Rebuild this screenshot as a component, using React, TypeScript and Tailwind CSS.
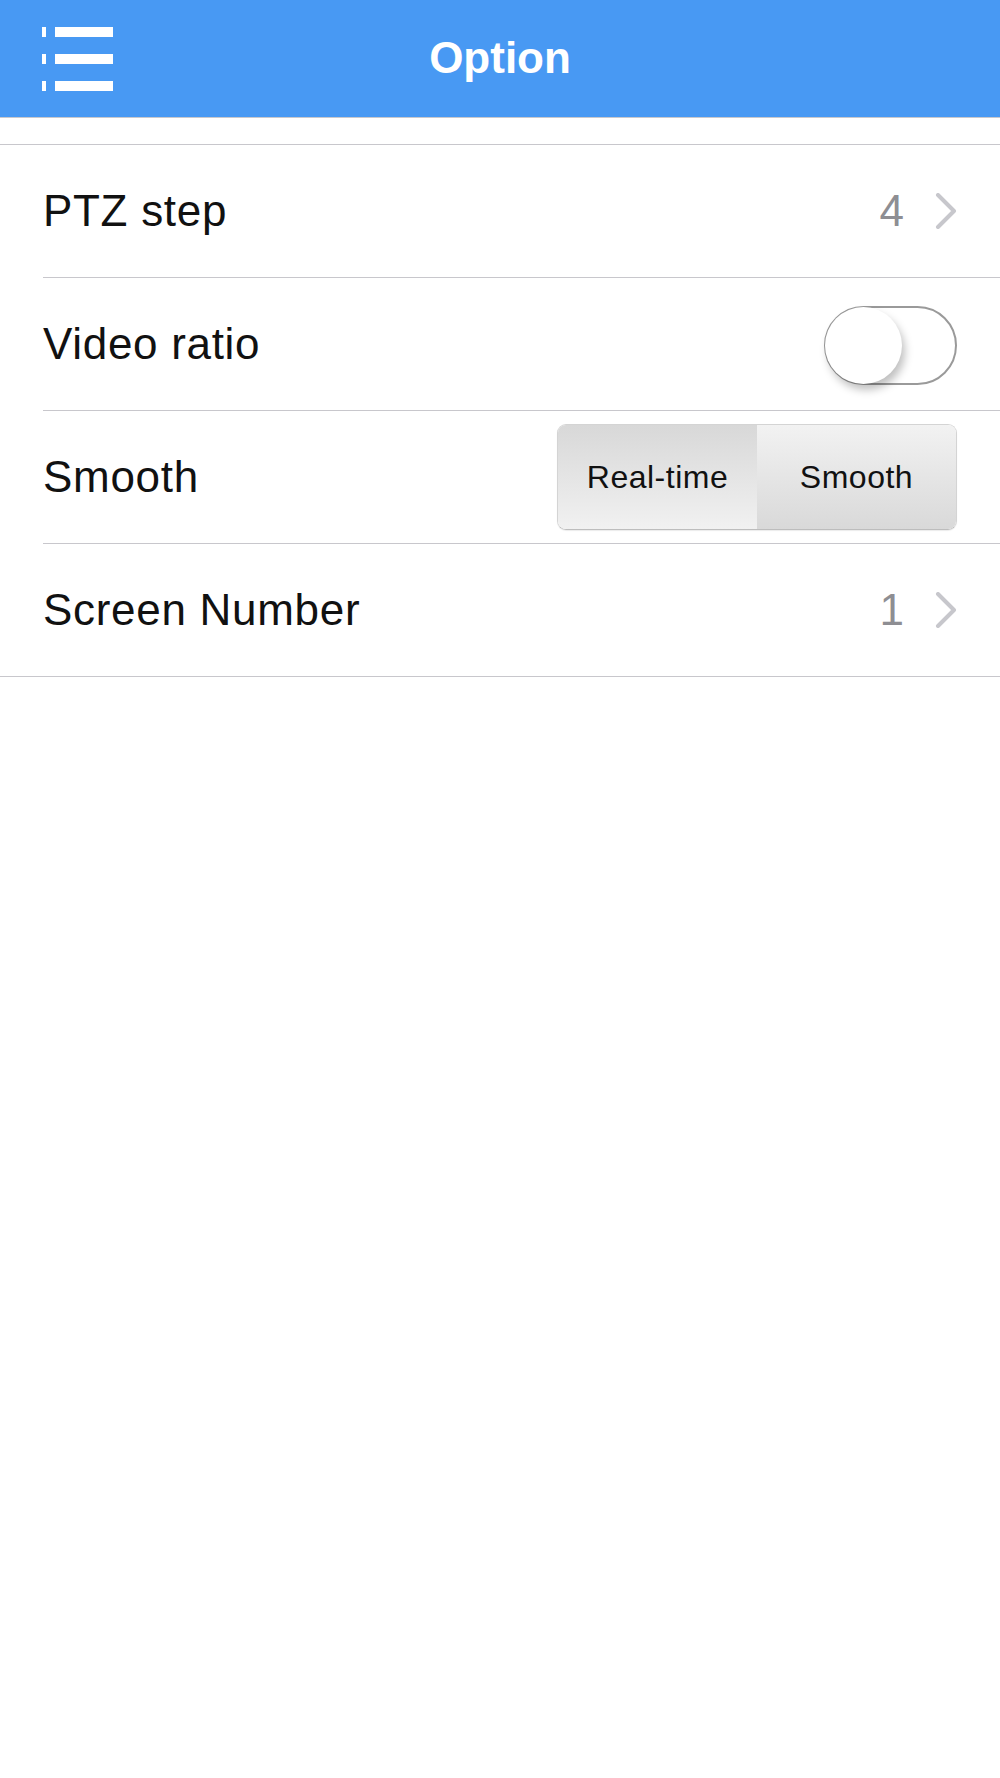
import { useState } from 'react';

const font = { fontFamily: '"Liberation Sans", Arial, sans-serif' };

const Chevron = () => (
  <svg width="22" height="36" viewBox="0 0 22 36" fill="none">
    <path d="M3 2 L19 18 L3 34" stroke="#c7c7cc" strokeWidth="4" strokeLinecap="round" strokeLinejoin="round" />
  </svg>
);

const MenuIcon = () => (
  <div className="flex flex-col gap-[17px]">
    {[0, 1, 2].map((i) => (
      <div key={i} className="flex items-center gap-[9px]">
        <div className="w-[4px] h-[10px] bg-white" />
        <div className="w-[58px] h-[10px] bg-white" />
      </div>
    ))}
  </div>
);

const App: React.FC = () => {
  const [ratio, setRatio] = useState(false);
  const [mode, setMode] = useState<'realtime' | 'smooth'>('smooth');

  return (
    <div className="w-[1000px] min-h-[1778px] bg-white" style={font}>
      {/* header */}
      <div className="relative h-[117px] bg-[#4899f3] flex items-center justify-center">
        <div className="absolute left-[42px] top-[27px]">
          <MenuIcon />
        </div>
        <h1 className="text-white text-[44px] font-bold leading-none -mt-[2px]">Option</h1>
      </div>
      <div className="h-px bg-[#c8c8cc]" />

      <div className="h-[26px]" />

      <div className="border-t border-[#c8c7cc]">
        {/* PTZ step */}
        <div className="h-[132px] flex items-center justify-between pl-[43px] pr-[43px]">
          <span className="text-[44px] tracking-[0.7px] text-[#111]">PTZ step</span>
          <div className="flex items-center gap-[31px]">
            <span className="text-[44px] text-[#8e8e93]">4</span>
            <Chevron />
          </div>
        </div>
        <div className="ml-[43px] h-px bg-[#c8c7cc]" />

        {/* Video ratio */}
        <div className="h-[132px] flex items-center justify-between pl-[43px] pr-[43px]">
          <span className="text-[44px] tracking-[0.7px] text-[#111]">Video ratio</span>
          <button
            onClick={() => setRatio(!ratio)}
            className={`relative w-[133px] h-[79px] rounded-full border-2 mt-[2px] ${ratio ? 'bg-[#4cd964] border-[#4cd964]' : 'bg-white border-[#9a9a9a]'}`}
          >
            <span
              className={`absolute top-[-1px] w-[77px] h-[77px] rounded-full bg-white shadow-[3px_6px_8px_rgba(0,0,0,0.25)] ${ratio ? 'right-[-1px]' : 'left-[-1px]'}`}
            />
          </button>
        </div>
        <div className="ml-[43px] h-px bg-[#c8c7cc]" />

        {/* Smooth */}
        <div className="h-[132px] flex items-center justify-between pl-[43px] pr-[43px]">
          <span className="text-[44px] tracking-[0.7px] text-[#111]">Smooth</span>
          <div className="flex w-[400px] h-[106px] rounded-[9px] overflow-hidden border border-[#d4d4d4] border-b-[#bdbdbd] shadow-[0_1px_1px_rgba(0,0,0,0.08)]">
            <button
              onClick={() => setMode('realtime')}
              className="flex-1 flex items-center justify-center bg-gradient-to-b from-[#d8d8d8] to-[#f1f1f1] text-[32px] tracking-[0.5px] text-[#111]"
            >
              Real-time
            </button>
            <button
              onClick={() => setMode('smooth')}
              className="flex-1 flex items-center justify-center bg-gradient-to-b from-[#f2f2f2] to-[#d9d9d9] text-[32px] tracking-[0.5px] text-[#111]"
            >
              Smooth
            </button>
          </div>
        </div>
        <div className="ml-[43px] h-px bg-[#c8c7cc]" />

        {/* Screen Number */}
        <div className="h-[132px] flex items-center justify-between pl-[43px] pr-[43px]">
          <span className="text-[44px] tracking-[0.7px] text-[#111]">Screen Number</span>
          <div className="flex items-center gap-[31px]">
            <span className="text-[44px] text-[#8e8e93]">1</span>
            <Chevron />
          </div>
        </div>
        <div className="h-px bg-[#c8c7cc]" />
      </div>
      <span className="hidden">{mode}</span>
    </div>
  );
};

export default App;
